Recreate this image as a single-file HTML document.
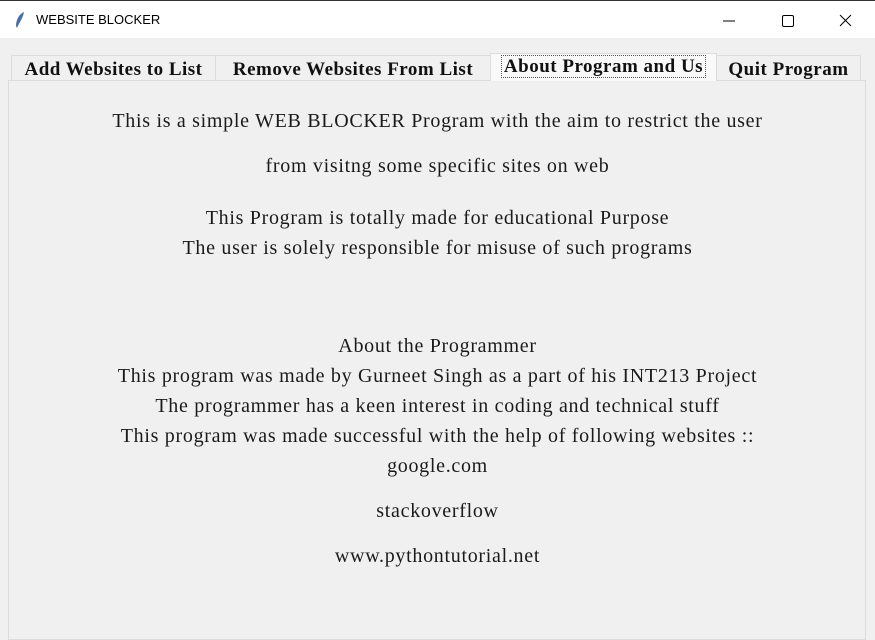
<!DOCTYPE html>
<html><head><style>
body{margin:0;width:875px;height:625px;overflow:hidden;background:#f0f0f0;font-family:"Liberation Serif",serif;position:relative}
.title{position:absolute;left:0;top:0;width:875px;height:38px;background:#fff;border-top:1px solid #333;box-sizing:border-box}
.title span{position:absolute;left:36px;top:11px;font:13px "Liberation Sans",sans-serif;color:#000}
.tab{position:absolute;top:55px;height:25px;border:1px solid #dcdcdc;border-bottom:none;background:#f0f0f0;box-sizing:border-box;font-weight:bold;font-size:19px;letter-spacing:0.5px;text-align:center;line-height:28px;color:#111;white-space:nowrap}
.sel{top:53px;height:28px;background:#f9f9f9;line-height:26px;z-index:2}
.sel span{border:1px dotted #555;padding:0 2px}
.panel{position:absolute;left:8px;top:80px;width:858px;height:560px;border:1px solid #dcdcdc;box-sizing:border-box}
.t{position:absolute;left:0;width:875px;text-align:center;font-size:20px;letter-spacing:0.7px;color:#1a1a1a}
</style></head><body>
<div class="title">
<svg style="position:absolute;left:14px;top:10px" width="12" height="18" viewBox="0 0 12 18"><path d="M10 1C5 3 2 9 2 15L3 17C5 12 9 7 10 1Z" fill="#4a6fa5"/></svg>
<span>WEBSITE BLOCKER</span>
<svg style="position:absolute;left:720px;top:12px" width="140" height="16"><line x1="3" y1="8" x2="15" y2="8" stroke="#000"/><rect x="62.5" y="2.5" width="11" height="11" rx="1.5" fill="none" stroke="#000"/><path d="M120 2L131 13M131 2L120 13" stroke="#000"/></svg>
</div>
<div class="panel"></div>
<div class="tab" style="left:11px;width:205px">Add Websites to List</div>
<div class="tab" style="left:215px;width:276px">Remove Websites From List</div>
<div class="tab sel" style="left:490px;width:227px"><span>About Program and Us</span></div>
<div class="tab" style="left:716px;width:145px">Quit Program</div>
<div class="t" style="top:110px">This is a simple WEB BLOCKER Program with the aim to restrict the user</div>
<div class="t" style="top:155px">from visitng some specific sites on web</div>
<div class="t" style="top:207px">This Program is totally made for educational Purpose</div>
<div class="t" style="top:237px">The user is solely responsible for misuse of such programs</div>
<div class="t" style="top:335px">About the Programmer</div>
<div class="t" style="top:365px">This program was made by Gurneet Singh as a part of his INT213 Project</div>
<div class="t" style="top:395px">The programmer has a keen interest in coding and technical stuff</div>
<div class="t" style="top:425px">This program was made successful with the help of following websites ::</div>
<div class="t" style="top:455px">google.com</div>
<div class="t" style="top:500px">stackoverflow</div>
<div class="t" style="top:545px">www.pythontutorial.net</div>
</body></html>
